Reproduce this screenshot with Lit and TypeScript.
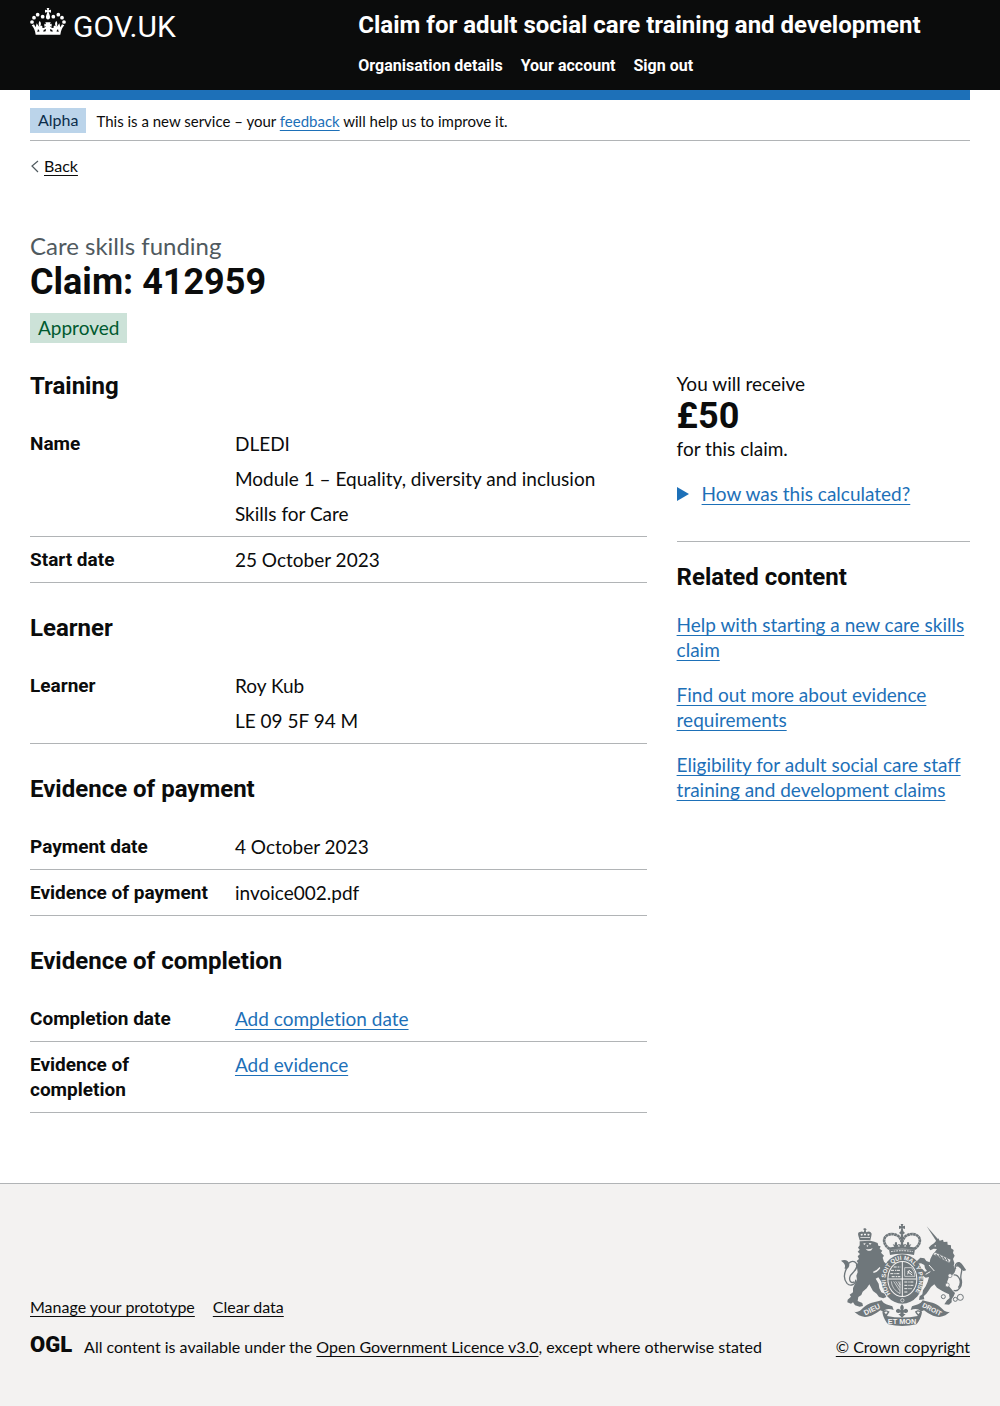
import { LitElement, html, svg, css } from "lit";
import { customElement } from "lit/decorators.js";

type Line = { text: string; href?: string };
type Row = { key: string; lines: Line[] };
type Section = { title: string; rows: Row[] };

const SECTIONS: Section[] = [
  {
    title: "Training",
    rows: [
      {
        key: "Name",
        lines: [
          { text: "DLEDI" },
          { text: "Module 1 – Equality, diversity and inclusion" },
          { text: "Skills for Care" },
        ],
      },
      { key: "Start date", lines: [{ text: "25 October 2023" }] },
    ],
  },
  {
    title: "Learner",
    rows: [{ key: "Learner", lines: [{ text: "Roy Kub" }, { text: "LE 09 5F 94 M" }] }],
  },
  {
    title: "Evidence of payment",
    rows: [
      { key: "Payment date", lines: [{ text: "4 October 2023" }] },
      { key: "Evidence of payment", lines: [{ text: "invoice002.pdf" }] },
    ],
  },
  {
    title: "Evidence of completion",
    rows: [
      { key: "Completion date", lines: [{ text: "Add completion date", href: "#date" }] },
      { key: "Evidence of completion", lines: [{ text: "Add evidence", href: "#evidence" }] },
    ],
  },
];

const RELATED = [
  "Help with starting a new care skills claim",
  "Find out more about evidence requirements",
  "Eligibility for adult social care staff training and development claims",
];

const crownHalf = svg`
  <circle cx="6" cy="42" r="5.6"/>
  <circle cx="12" cy="29" r="5.6"/>
  <circle cx="23" cy="20" r="5.6"/>
  <circle cx="38" cy="26" r="5.6"/>
  <path d="M54 80 H17 C15 66 11 58 5 52 L12 49 L17 58 L20 46 L28 57 C25 48 26 43 29 39 C33 43 34 48 31 55 C35 52 38 54 37 59 C42 61 46 58 48 54 L43 56 V47 L48 49 L46 43 H54 Z"/>`;

const crown = svg`
  <g fill="currentColor">
    <g>${crownHalf}</g>
    <g transform="translate(108 0) scale(-1 1)">${crownHalf}</g>
    <path d="M50 0 H58 L56 7 L63 5 V14 L56 12 L60 25 C62 38 46 38 48 25 L52 12 L45 14 V5 L52 7 Z"/>
  </g>
  <g fill="#0b0c0c">
    <path d="M24 63 L29 70 L22 72 Z M84 63 L79 70 L86 72 Z M41 66 L48 63 L47 70 L40 71 Z M67 66 L60 63 L61 70 L68 71 Z"/>
  </g>`;

const lion = svg`
  <g fill="currentColor">
    <path d="M92 76 L88 62 Q85 52 93 51 Q99 48 104 52 L106 46 L102 42 L108 39 L113 43 L110 47 L112 52 Q120 47 125 52 Q130 56 127 63 L124 76 Z"/>
    <path d="M92 79 L124 77 L136 80 L146 84 L148 92 L155 94 L152 101 L160 107 L156 113 L165 122 L161 128 L165 140 L174 149 L178 158 L170 164 L176 171 L176 181 L166 178 L163 186 L172 190 L165 199 L158 202 L148 187 L140 191 L149 206 L151 220 L157 232 L167 236 L172 246 L163 250 L150 246 L143 236 L132 228 L121 208 L113 220 L101 230 L97 240 L88 246 L86 258 L100 264 L102 273 L92 275 L78 271 L72 262 L66 266 L55 262 L56 254 L66 245 L62 239 L72 232 L72 219 L78 206 L84 194 L82 182 L86 172 L84 158 L80 150 L87 144 L83 138 L90 132 L86 124 L93 117 L86 110 L92 104 L87 98 L92 91 Z"/>
    <path d="M36 137 C50 132 60 138 61 148 C62 158 54 165 46 160 C52 152 46 144 36 137 Z"/>
  </g>
  <path d="M54 158 C44 176 43 192 54 205 C64 216 82 208 80 194 M50 158 C54 144 72 132 82 145 C90 158 72 172 64 182 C58 196 66 208 76 200" fill="none" stroke="currentColor" stroke-width="4"/>
  <g fill="#f3f2f1">
    <path d="M102 86 L110 84 L107 90 Z M119 84 L128 85 L123 90 Z M110 101 Q120 106 131 99 L127 106 Q120 109 114 106 Z M112 92 L118 90 L116 96 Z"/>
    <path d="M95 57 L101 56 V61 L96 62 Z M105 56 H111 V61 H105 Z M116 56 L122 57 L120 62 L115 61 Z M94 67 H123 V69 H94 Z"/>
    <path d="M132 170 Q144 166 152 156 L154 159 Q146 172 134 174 Z"/>
  </g>`;

const unicorn = svg`
  <path d="M293 34 L330 76 L323 80 Z" fill="currentColor"/>
  <g fill="currentColor">
    <path d="M321 78 L328 70 L332 77 L342 74 L344 81 L355 80 L356 89 L366 91 L366 100 L374 105 L372 114 L377 122 L372 132 L376 144 L374 152 L380 164 L376 174 L369 181 L359 188 L354 202 L360 214 L372 228 L378 234 L374 244 L368 253 L368 262 L360 269 L346 268 L354 256 L362 249 L360 238 L347 232 L336 226 L324 218 L316 208 L306 216 L298 228 L292 236 L284 244 L286 253 L270 255 L272 244 L280 238 L282 226 L290 214 L296 200 L300 186 L290 188 L280 181 L270 180 L264 170 L270 163 L280 162 L288 170 L294 168 L288 160 L286 150 L276 145 L265 146 L264 138 L274 128 L286 130 L292 138 L302 142 L304 132 L310 120 L318 110 L324 102 L314 101 L304 106 L299 98 L306 91 L315 85 Z"/>
    <path d="M412 165 C405 158 402 147 392 142 C384 142 380 148 382 156 C388 150 392 160 404 168 Z"/>
  </g>
  <path d="M380 162 C374 144 392 136 396 150 C404 164 392 178 396 192 C402 212 388 232 374 226 M374 180 C388 178 402 200 388 218" fill="none" stroke="currentColor" stroke-width="4"/>
  <g fill="none" stroke="currentColor" stroke-width="3">
    <circle cx="394" cy="247" r="9"/><circle cx="379" cy="253" r="6"/><circle cx="343" cy="245" r="6"/>
  </g>
  <g fill="#f3f2f1" stroke="currentColor" stroke-width="2">
    <path d="M312 118 L318 112 L366 134 L361 144 Z"/>
    <circle cx="355" cy="210" r="6"/><circle cx="363" cy="182" r="6"/>
    <path d="M315 93 L321 90 L320 95 Z" stroke="none"/>
  </g>
  <path d="M320 118 L330 128 M330 120 L340 132 M341 125 L350 136 M352 129 L358 140" stroke="currentColor" stroke-width="4"/>
  <path d="M300 150 L316 168 M304 170 L290 178" stroke="#f3f2f1" stroke-width="3"/>`;

const imperialCrown = svg`
  <g fill="none" stroke="currentColor">
    <path d="M182 102 C148 78 172 48 202 60 C212 64 215 72 218 80 M256 102 C290 78 266 48 236 60 C226 64 223 72 220 80" stroke-width="8" stroke-dasharray="8 1"/>
    <path d="M219 58 V98 M182 101 Q219 94 257 101" stroke-width="7"/>
  </g>
  <g fill="currentColor">
    <path d="M215 27 H223 L221 34 L228 32 V42 L221 40 L223 49 L228 54 L219 60 L210 54 L215 49 L217 40 L210 42 V32 L217 34 Z"/>
    <path d="M180 103 L258 103 L255 120 Q219 112 183 120 Z"/>
    <path d="M196 96 L191 87 L197 90 L198 82 L204 82 L204 90 L210 87 L206 96 Z M242 96 L247 87 L241 90 L240 82 L234 82 L234 90 L228 87 L232 96 Z M213 96 L209 87 L216 89 V80 H222 V89 L229 87 L225 96 Z"/>
  </g>
  <path d="M186 110 Q219 104 252 110" stroke="#f3f2f1" stroke-width="3" stroke-dasharray="5 3" fill="none"/>`;

const shield = svg`
  <ellipse cx="220" cy="192" rx="63" ry="74" fill="currentColor"/>
  <ellipse cx="220" cy="192" rx="45" ry="54" fill="#f3f2f1"/>
  <ellipse cx="220" cy="192" rx="42" ry="51" fill="currentColor"/>
  <g fill="none" stroke="#f3f2f1">
    <path d="M220 140 V244 M177 192 H263" stroke-width="3"/>
    <path d="M186 166 H214 M184 176 H214 M188 185 H214 M194 156 H214 M226 201 H256 M226 211 H253 M226 221 H248 M226 231 H238" stroke-width="3" stroke-dasharray="9 3 4 2"/>
    <path d="M227 184 V158 L248 158 Q258 170 258 184 Z" stroke-width="2"/>
    <path d="M236 178 L240 166 L250 174 M235 170 L250 180" stroke-width="3"/>
    <path d="M187 199 Q188 222 213 236 M194 199 L212 227 M200 199 L213 218 M207 199 L214 210 M213 199 V236" stroke-width="2"/>
  </g>
  <path id="garter" d="M185 236 A50 59 0 1 1 255 236" fill="none"/>
  <text font-family="Liberation Sans, sans-serif" font-size="18" font-weight="700" fill="#f3f2f1">
    <textPath href="#garter">HONI SOIT QUI MAL Y PENSE</textPath>
  </text>
  <circle cx="220" cy="256" r="5" fill="none" stroke="#f3f2f1" stroke-width="2"/>`;

const motto = svg`
  <g fill="currentColor">
    <path d="M76 290 C92 294 98 280 110 272 C126 262 144 260 158 256 C164 268 178 270 190 274 L194 285 C180 280 166 282 164 290 L154 286 C140 296 126 306 108 306 C94 304 84 298 76 290 Z"/>
    <path d="M363 290 C347 294 341 280 329 272 C313 262 295 260 281 256 C275 268 261 270 249 274 L245 285 C259 280 273 282 275 290 L285 286 C299 296 313 306 331 306 C345 304 355 298 363 290 Z"/>
    <path d="M160 290 C162 308 172 322 178 328 Q219 338 262 328 C268 322 277 308 279 290 C272 284 264 284 258 290 C262 298 266 300 266 303 Q219 312 174 303 C176 298 178 296 182 290 C174 284 166 284 160 290 Z"/>
    <path d="M219 268 Q228 276 222 286 Q232 276 237 286 Q238 295 228 294 L224 292 V297 H230 L219 308 L208 297 H214 V292 L210 294 Q200 295 201 286 Q206 276 216 286 Q210 276 219 268 Z"/>
  </g>
  <path d="M166 292 Q172 288 176 291 L171 298 Z M273 292 Q267 288 263 291 L268 298 Z" fill="#f3f2f1"/>
  <g font-family="Liberation Sans, sans-serif" font-size="22" font-weight="700" fill="#f3f2f1" text-anchor="middle">
    <text transform="translate(132 290) rotate(-26)">DIEU</text>
    <text transform="translate(306 289) rotate(27)" font-size="20">DROIT</text>
    <text x="219" y="328">ET MON</text>
  </g>`;

@customElement("app-root")
export class AppRoot extends LitElement {
  static styles = css`
    :host {
      display: block;
      color: #0b0c0c;
      font: 400 19px/25px Lato, "Liberation Sans", sans-serif;
      font-variant-ligatures: none;
    }
    * {
      box-sizing: border-box;
    }
    h1, h2, p, dl, dd, ul {
      margin: 0;
      padding: 0;
    }
    a {
      color: #1d70b8;
      text-decoration: underline;
      text-decoration-thickness: 1px;
      text-underline-offset: 3px;
      text-decoration-skip-ink: none;
    }
    svg {
      display: block;
      flex: none;
    }
    .container {
      max-width: 960px;
      margin: 0 auto;
    }
    .gutter {
      padding: 0 30px;
    }
    .header {
      background: #0b0c0c;
      color: #ffffff;
      font-family: Roboto, "Liberation Sans", sans-serif;
    }
    .header-row {
      display: flex;
      min-height: 90px;
    }
    .logo {
      flex: 0 0 33.33%;
      padding-top: 8px;
    }
    .logo-link {
      display: inline-flex;
      gap: 7px;
      color: #ffffff;
      text-decoration: none;
      font-size: 30px;
      line-height: 38px;
    }
    .header-content {
      padding: 10px 0 0 15px;
    }
    .service {
      display: block;
      color: #ffffff;
      font-size: 24px;
      font-weight: 700;
      line-height: 30px;
      text-decoration: none;
    }
    .nav {
      display: flex;
      gap: 18px;
      padding-top: 16px;
      list-style: none;
    }
    .nav a {
      display: block;
      color: #ffffff;
      font-size: 16px;
      font-weight: 700;
      line-height: 20px;
      text-decoration: none;
    }
    .bar {
      height: 10px;
      background: #1d70b8;
    }
    .phase {
      display: flex;
      align-items: center;
      gap: 10px;
      padding: 8px 0 7px;
      border-bottom: 1px solid #b1b4b6;
      font-size: 15px;
      line-height: 20px;
    }
    .tag {
      display: inline-block;
      padding: 2px 8px 3px;
      background: #bbd4ea;
      color: #0c2d4a;
      font-size: 16px;
      font-weight: 400;
      line-height: 20px;
    }
    .tag-green {
      margin-top: 10px;
      background: #cce2d8;
      color: #005a30;
      font-size: 19px;
      line-height: 25px;
    }
    .back {
      display: inline-flex;
      align-items: center;
      gap: 5px;
      margin-top: 15px;
      color: #0b0c0c;
      font-size: 16px;
      line-height: 20px;
    }
    .main {
      padding: 53px 0 40px;
    }
    .caption {
      display: block;
      color: #505a5f;
      font-family: Lato, "Liberation Sans", sans-serif;
      font-size: 24px;
      font-weight: 400;
      line-height: 30px;
    }
    .title {
      font-family: Roboto, "Liberation Sans", sans-serif;
      font-size: 36px;
      font-weight: 700;
      line-height: 42px;
    }
    .columns {
      display: flex;
      gap: 30px;
      padding-top: 28px;
    }
    .primary {
      flex: 0 0 calc(66.66% - 10px);
    }
    .aside {
      flex: 1;
    }
    .heading {
      padding-bottom: 20px;
      font-family: Roboto, "Liberation Sans", sans-serif;
      font-size: 24px;
      font-weight: 700;
      line-height: 30px;
    }
    .summary {
      padding-bottom: 30px;
    }
    .row {
      display: grid;
      grid-template-columns: 30% 1fr;
      column-gap: 20px;
      padding: 10px 0;
      border-bottom: 1px solid #b1b4b6;
    }
    .key {
      font-family: Roboto, "Liberation Sans", sans-serif;
      font-weight: 700;
    }
    .value {
      display: grid;
      gap: 10px;
    }
    .amount {
      display: block;
      font-family: Roboto, "Liberation Sans", sans-serif;
      font-size: 36px;
      font-weight: 700;
      line-height: 40px;
    }
    .details {
      padding: 20px 0 35px;
      border-bottom: 1px solid #b1b4b6;
    }
    .details summary {
      display: flex;
      align-items: center;
      gap: 13px;
      color: #1d70b8;
      cursor: pointer;
      list-style: none;
    }
    .details span {
      text-decoration: underline;
      text-decoration-thickness: 1px;
      text-underline-offset: 3px;
      text-decoration-skip-ink: none;
    }
    .related {
      padding-top: 20px;
    }
    .related ul {
      display: grid;
      gap: 20px;
      list-style: none;
    }
    .footer {
      padding-top: 39px;
      padding-bottom: 49px;
      border-top: 1px solid #b1b4b6;
      background: #f3f2f1;
      font-size: 16px;
      line-height: 20px;
    }
    .footer a {
      color: #0b0c0c;
    }
    .footer-row {
      display: flex;
      align-items: flex-end;
      justify-content: space-between;
    }
    .footer-links {
      display: flex;
      gap: 18px;
      padding-bottom: 20px;
      list-style: none;
    }
    .licence {
      display: flex;
      align-items: flex-start;
      gap: 12px;
    }
    .ogl {
      font-family: Roboto, "Liberation Sans", sans-serif;
      font-size: 22px;
      font-weight: 900;
      line-height: 16px;
    }
    .crest {
      display: flex;
      flex-direction: column;
      align-items: center;
      gap: 10px;
      text-align: center;
    }
    .arms {
      color: #6f777b;
    }
  `;

  private section(s: Section) {
    return html`
      <section>
        <h2 class="heading">${s.title}</h2>
        <div class="summary">
          ${s.rows.map(
            (r) => html`<dl class="row">
              <dt class="key">${r.key}</dt>
              <dd class="value">
                ${r.lines.map((l) => html`<p>${l.href ? html`<a href=${l.href}>${l.text}</a>` : l.text}</p>`)}
              </dd>
            </dl>`
          )}
        </div>
      </section>
    `;
  }

  render() {
    return html`
      <header class="header">
        <div class="gutter">
          <div class="container header-row">
            <div class="logo">
              <a class="logo-link" href="#home">
                <svg width="36" height="27" viewBox="0 0 108 81" aria-hidden="true">${crown}</svg>
                <span>GOV.UK</span>
              </a>
            </div>
            <div class="header-content">
              <a class="service" href="#service">Claim for adult social care training and development</a>
              <nav>
                <ul class="nav">
                  <li><a href="#organisation">Organisation details</a></li>
                  <li><a href="#account">Your account</a></li>
                  <li><a href="#signout">Sign out</a></li>
                </ul>
              </nav>
            </div>
          </div>
        </div>
      </header>

      <div class="gutter">
        <div class="container">
          <div class="bar"></div>
          <div class="phase">
            <strong class="tag">Alpha</strong>
            <span>This is a new service – your <a href="#feedback">feedback</a> will help us to improve it.</span>
          </div>
          <a class="back" href="#back">
            <svg width="9" height="14" viewBox="0 0 9 14" aria-hidden="true">
              <path d="M8 2 L2 7 L8 13" fill="none" stroke="#505a5f" stroke-width="1.2" />
            </svg>Back</a>

          <main class="main">
            <h1 class="title"><span class="caption">Care skills funding</span>Claim: 412959</h1>
            <span class="tag tag-green">Approved</span>
            <div class="columns">
              <div class="primary">${SECTIONS.map((s) => this.section(s))}</div>
              <aside class="aside">
                <p>You will receive <strong class="amount">£50</strong> for this claim.</p>
                <details class="details">
                  <summary>
                    <svg width="12" height="14" viewBox="0 0 12 14" aria-hidden="true">
                      <path d="M0 0 L12 7 L0 14 Z" fill="#1d70b8" />
                    </svg>
                    <span>How was this calculated?</span>
                  </summary>
                </details>
                <nav class="related">
                  <h2 class="heading">Related content</h2>
                  <ul>
                    ${RELATED.map((t) => html`<li><a href="#related">${t}</a></li>`)}
                  </ul>
                </nav>
              </aside>
            </div>
          </main>
        </div>
      </div>

      <footer class="footer gutter">
        <div class="container footer-row">
          <div>
            <ul class="footer-links">
              <li><a href="#prototype">Manage your prototype</a></li>
              <li><a href="#clear">Clear data</a></li>
            </ul>
            <div class="licence">
              <span class="ogl">OGL</span>
              <span>All content is available under the <a href="#licence">Open Government Licence v3.0</a>, except where otherwise stated</span>
            </div>
          </div>
          <div class="crest">
            <svg class="arms" width="126" height="104" viewBox="33 24 378 312" aria-hidden="true">
              ${motto}${lion}${unicorn}${imperialCrown}${shield}
            </svg>
            <a href="#copyright">© Crown copyright</a>
          </div>
        </div>
      </footer>
    `;
  }
}
